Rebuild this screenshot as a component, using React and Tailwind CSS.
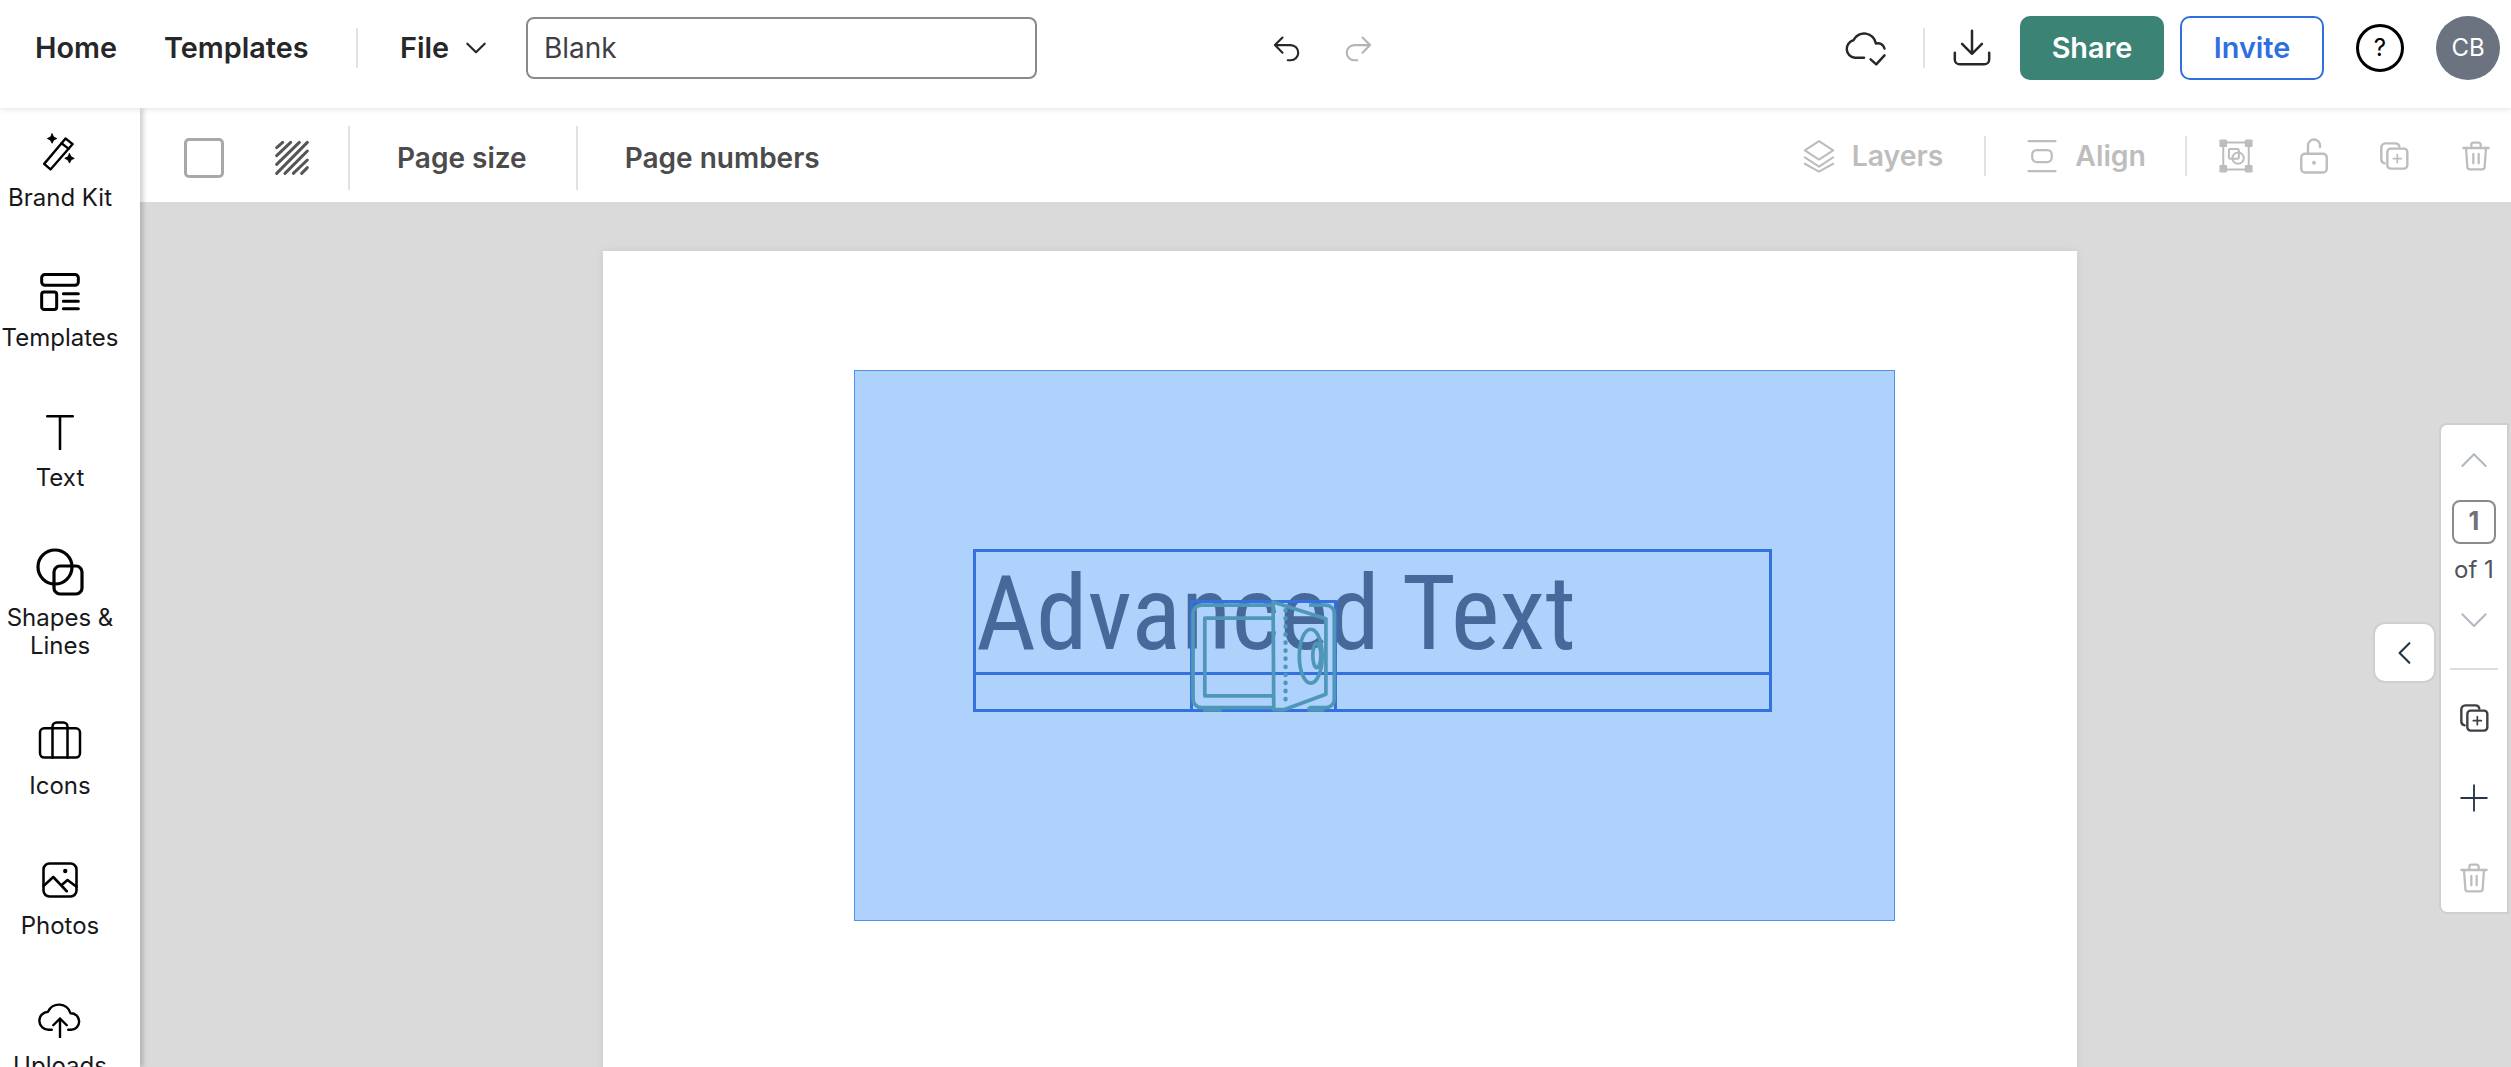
import React from 'react';

// shared stroke icon wrapper
function Ico({ w, h, vb = '0 0 24 24', sw = 2, className = '', children }) {
  return (
    <svg
      width={w}
      height={h}
      viewBox={vb}
      fill="none"
      stroke="currentColor"
      strokeWidth={sw}
      strokeLinecap="round"
      strokeLinejoin="round"
      className={`shrink-0 ${className}`}
    >
      {children}
    </svg>
  );
}

const CopyPlus = ({ size, className }) => (
  <Ico w={size} h={size} sw={1.8} className={className}>
    <path d="M5 17.5A3 3 0 0 1 2.5 15V5.5a3 3 0 0 1 3-3H13a3 3 0 0 1 3 2.5" />
    <rect x="7" y="6.5" width="15" height="15" rx="2.5" />
    <path d="M14.5 11v6M11.5 14h6" strokeWidth={1.3} />
  </Ico>
);

const Trash = ({ w, h, className }) => (
  <Ico w={w} h={h} sw={1.7} className={className}>
    <path d="M2.5 6h19M8.5 6V3.5a1.5 1.5 0 0 1 1.5-1.5h4a1.5 1.5 0 0 1 1.5 1.5V6" />
    <path d="M4.5 6l1 14a2 2 0 0 0 2 2h9a2 2 0 0 0 2-2l1-14M10 10.5v7M14 10.5v7" />
  </Ico>
);

const sideItems = [
  {
    label: 'Brand Kit',
    icon: (
      <Ico w={40} h={38} sw={1.5}>
        <path d="M2 19.5L15.5 3.5l4.5 3.5L6 23z" />
        <path d="M13 6.5l4.5 3.5" />
        <path d="M7 .5l1 2 2 1-2 1-1 2-1-2-2-1 2-1zM18 13l1 2 2 1-2 1-1 2-1-2-2-1 2-1z" fill="currentColor" strokeWidth={0.5} />
      </Ico>
    ),
  },
  {
    label: 'Templates',
    icon: (
      <Ico w={40} h={40} sw={1.8}>
        <rect x="1" y="1.5" width="22" height="6.5" rx="2" />
        <rect x="1" y="12" width="9" height="10.5" rx="1.5" />
        <path d="M14 13h9M14 17.5h9M14 22h9" />
      </Ico>
    ),
  },
  {
    label: 'Text',
    icon: (
      <Ico w={36} h={36} sw={1.7}>
        <path d="M3.5 1.5h17M12 1.5v22" />
      </Ico>
    ),
  },
  {
    label: 'Shapes & Lines',
    icon: (
      <Ico w={48} h={48} sw={1.6}>
        <circle cx="9.5" cy="9.5" r="8.5" />
        <rect x="9" y="9" width="14" height="14" rx="3" />
      </Ico>
    ),
  },
  {
    label: 'Icons',
    icon: (
      <Ico w={44} h={40} vb="0 0 26 24" sw={1.5}>
        <rect x="1" y="5" width="24" height="17.5" rx="2.5" />
        <path d="M8.5 22.5V4a2.5 2.5 0 0 1 2.5-2.5h4A2.5 2.5 0 0 1 17.5 4v18.5" />
      </Ico>
    ),
  },
  {
    label: 'Photos',
    icon: (
      <Ico w={36} h={36} sw={1.7}>
        <rect x="1" y="1" width="22" height="22" rx="4" />
        <path d="M1 16l6.5-6 9 9.5M13.5 15l3.5-3 6 4.5" />
        <circle cx="15.5" cy="6" r=".6" fill="currentColor" />
      </Ico>
    ),
  },
  {
    label: 'Uploads',
    icon: (
      <Ico w={44} h={36} vb="0 0 29 24" sw={1.6}>
        <path d="M9 18.5H7A6 6 0 0 1 6.5 6.5 8 8 0 0 1 21.5 7.5a5.5 5.5 0 0 1 .5 11h-2" />
        <path d="M14.5 23.5V11M10 15.5l4.5-4.5 4.5 4.5" />
      </Ico>
    ),
  },
];

function SideItem({ label, icon }) {
  return (
    <div className="flex flex-col items-center w-full">
      <div className="h-[40px] flex items-center justify-center">{icon}</div>
      <div className="mt-[12px] text-center text-[24px] leading-[28px] text-[#18181b]">{label}</div>
    </div>
  );
}

function Divider({ h, className = '' }) {
  return <div className={`w-[2px] bg-[#e2e2e2] ${h} ${className}`} />;
}

function TopBar() {
  return (
    <header className="h-[108px] pb-[12px] shrink-0 bg-white flex items-center relative z-20 shadow-[0_1px_6px_rgba(0,0,0,0.12)] text-[#27272a]">
      <div className="ml-[35px] w-[80px] text-[28.8px] font-semibold">Home</div>
      <div className="ml-[49px] w-[143px] whitespace-nowrap text-[28.8px] font-semibold">Templates</div>
      <Divider h="h-[40px]" className="ml-[49px]" />
      <div className="ml-[42px] w-[48px] text-[28.8px] font-semibold">File</div>
      <Ico w={26} h={26} sw={2} className="ml-[15px] text-[#27272a]">
        <path d="M4 8l8 8 8-8" />
      </Ico>
      <div className="ml-[37px] w-[511px] h-[62px] border-2 border-[#8a8a8a] rounded-[8px] flex items-center pl-[16px] text-[28px] text-[#3f3f46]">
        Blank
      </div>
      <Ico w={32} h={28} sw={1.8} className="ml-[233px]">
        <path d="M9 3L2.5 9.5 9 16M2.5 9.5H16a6.5 6.5 0 0 1 0 13h-2.5" />
      </Ico>
      <Ico w={32} h={28} sw={1.8} className="ml-[41px] text-[#b5b5b5]">
        <path d="M15 3l6.5 6.5L15 16M21.5 9.5H8a6.5 6.5 0 0 0 0 13h2.5" />
      </Ico>
      <Ico w={45} h={38} vb="40 55 135 115" sw={7.5} className="ml-[468px]">
        <path d="M103 142H75a27 27 0 0 1-4-53 36 36 0 0 1 68 10 20 20 0 0 1 26 15" />
        <path d="M123 147l17 15 25-27" />
      </Ico>
      <Divider h="h-[40px]" className="ml-[35px]" />
      <Ico w={40} h={38} vb="365 55 120 115" sw={7.5} className="ml-[27px]">
        <path d="M425 60v70M395 100l30 30 30-30" />
        <path d="M373 127v20a15 15 0 0 0 15 15h74a15 15 0 0 0 15-15v-20" />
      </Ico>
      <div className="ml-[28px] w-[144px] h-[64px] rounded-[10px] bg-[#3b8375] text-white flex items-center justify-center text-[28.8px] font-semibold">
        Share
      </div>
      <div className="ml-[16px] w-[144px] h-[64px] rounded-[10px] border-2 border-[#2f6fdf] text-[#2f6fdf] flex items-center justify-center text-[28.8px] font-semibold">
        Invite
      </div>
      <div className="ml-[32px] w-[48px] h-[48px] rounded-full border-[3px] border-black flex items-center justify-center text-[24px] text-black">
        ?
      </div>
      <div className="ml-[32px] w-[64px] h-[64px] rounded-full bg-[#6b7280] text-white flex items-center justify-center text-[24px]">
        CB
      </div>
    </header>
  );
}

function ToolBar() {
  return (
    <div className="h-[94px] pt-[6px] shrink-0 bg-white flex items-center">
      <div className="ml-[44px] w-[40px] h-[40px] rounded-[5px] border-[3px] border-[#a8a8a8] bg-white" />
      <Ico w={36} h={36} vb="312 45 108 108" sw={9} className="ml-[50px] text-[#555555]">
        <path d="M320 68l18-16M320 92l42-40M320 118l68-66M320 145l92-93M345 145l67-67M370 145l42-40M395 145l17-17" />
      </Ico>
      <Divider h="h-[64px]" className="ml-[38px]" />
      <div className="ml-[47px] text-[28px] font-semibold text-[#4b4b4b]">Page size</div>
      <Divider h="h-[64px]" className="ml-[49px]" />
      <div className="ml-[47px] text-[28px] font-semibold text-[#4b4b4b]">Page numbers</div>

      <div className="ml-auto mb-[4px] flex items-center text-[#bdbdbd]">
        <Ico w={34} h={34} sw={1.5}>
          <path d="M12 1.5L22 8l-10 6.5L2 8zM2 13l10 6.5L22 13M2 17.5L12 23l10-5.5" />
        </Ico>
        <div className="ml-[16px] text-[28.4px] font-semibold">Layers</div>
        <Divider h="h-[40px]" className="ml-[41px]" />
        <Ico w={30} h={36} vb="0 0 20 24" sw={1.5} className="ml-[41px]">
          <path d="M1 2h18M1 22h18" />
          <rect x="3.5" y="8" width="13" height="8" rx="3" />
        </Ico>
        <div className="ml-[18px] text-[28.4px] font-semibold">Align</div>
        <Divider h="h-[40px]" className="ml-[39px]" />
        <Ico w={34} h={34} sw={1.4} className="ml-[32px]">
          <path d="M3 2.5h18M3 21.5h18M3 2.5v19M21 2.5v19" />
          <rect x="1" y="1" width="4" height="4" fill="currentColor" />
          <rect x="19" y="1" width="4" height="4" fill="currentColor" />
          <rect x="1" y="19" width="4" height="4" fill="currentColor" />
          <rect x="19" y="19" width="4" height="4" fill="currentColor" />
          <rect x="7" y="7" width="7" height="7" rx="1" />
          <circle cx="13.5" cy="13.5" r="4" />
        </Ico>
        <Ico w={30} h={36} vb="0 0 20 24" sw={1.6} className="ml-[46px]">
          <path d="M6 10V5a4 4 0 0 1 8 0v1" />
          <rect x="1.5" y="10.5" width="17" height="12.5" rx="2.5" />
          <circle cx="10" cy="16.5" r=".5" fill="currentColor" />
        </Ico>
        <CopyPlus size={32} className="ml-[49px]" />
        <Trash w={32} h={36} className="ml-[50px] mr-[19px]" />
      </div>
    </div>
  );
}

function Vault() {
  return (
    <svg
      viewBox="92 30 435 333"
      className="absolute -left-[3px] -top-[3px] w-[147px] h-[112px]"
      fill="none"
      stroke="#4f97b8"
      strokeWidth="11"
      strokeLinejoin="round"
    >
      <path d="M340 45H125a25 25 0 0 0-25 25v255a25 25 0 0 0 25 25h215" />
      <path d="M445 45h50a25 25 0 0 1 25 25v255a25 25 0 0 1-25 25h-50" />
      <path d="M335 84H135v231h200" />
      <path d="M338 36l157 50v224l-125 46h-30z" />
      <path d="M375 60v280" strokeDasharray="1 23" strokeLinecap="round" strokeWidth="13" />
      <ellipse cx="450" cy="197" rx="34" ry="80" />
      <ellipse cx="468" cy="195" rx="12" ry="36" />
      <path d="M130 355h55M440 355h50" strokeWidth="14" />
    </svg>
  );
}

function DesignPage() {
  return (
    <div className="relative w-[1474px] h-[1000px] bg-white shadow-[0_0_8px_rgba(0,0,0,0.08)]">
      <div className="absolute left-[251px] top-[119px] w-[1041px] h-[551px] bg-[#aed2fb] border border-[#5090ee]" />
      <div className="absolute left-[370px] top-[298px] w-[799px] h-[163px] border-[3px] border-[#3370e0]">
        <div className="h-[123px] border-b-[3px] border-[#3370e0]">
          <div className="font-['Roboto',sans-serif] text-[#47689a] text-[104px] leading-[123px] whitespace-nowrap [font-stretch:75%]">
            Advanced Text
          </div>
        </div>
      </div>
      <div className="absolute left-[587px] top-[349px] w-[147px] h-[112px] border-[3px] border-[#3370e0]">
        <Vault />
      </div>
    </div>
  );
}

function PagePanel() {
  return (
    <>
      <div className="absolute left-[2233px] top-[420px] w-[63px] h-[61px] bg-white rounded-[12px] border-2 border-[#cfcfcf] flex items-center justify-center text-[#27364a]">
        <Ico w={26} h={26} sw={2}>
          <path d="M16 3L7 12l9 9" />
        </Ico>
      </div>
      <div className="absolute left-[2299px] top-[221px] w-[70px] h-[491px] bg-white rounded-l-[8px] border-2 border-[#cfcfcf] flex flex-col items-center">
        <Ico w={28} h={28} sw={1.8} className="mt-[20px] text-[#b3b9c2]">
          <path d="M2 18L12 8l10 10" />
        </Ico>
        <div className="mt-[27px] w-[44px] h-[44px] shrink-0 rounded-[8px] border-2 border-[#8a8a8f] flex items-center justify-center text-[25px] font-bold text-[#71717a]">
          1
        </div>
        <div className="mt-[12px] text-[24px] leading-[28px] text-[#52525b]">of 1</div>
        <Ico w={28} h={28} sw={1.8} className="mt-[21px] text-[#b3b9c2]">
          <path d="M2 8l10 10L22 8" />
        </Ico>
        <div className="mt-[35px] w-[48px] h-[2px] shrink-0 bg-[#dddddd]" />
        <CopyPlus size={32} className="mt-[32px] text-[#3f3f46]" />
        <Ico w={28} h={28} sw={1.6} className="mt-[50px] text-[#27364a]">
          <path d="M12 1v22M1 12h22" />
        </Ico>
        <Trash w={32} h={36} className="mt-[48px] text-[#bdbdbd]" />
      </div>
    </>
  );
}

export default function App() {
  return (
    <div className="h-[1067px] w-full flex flex-col overflow-hidden font-['Inter',sans-serif]">
      <TopBar />
      <div className="flex flex-1 min-h-0">
        <aside className="w-[140px] shrink-0 bg-white relative z-10 pt-[24px] pr-[20px] overflow-hidden flex flex-col gap-[60px] shadow-[3px_0_5px_rgba(0,0,0,0.2)]">
          {sideItems.map((item) => (
            <SideItem key={item.label} label={item.label} icon={item.icon} />
          ))}
        </aside>
        <main className="flex-1 min-w-0 flex flex-col">
          <ToolBar />
          <div className="flex-1 min-h-0 relative bg-[#dadada] overflow-hidden pl-[463px] pt-[49px]">
            <DesignPage />
            <PagePanel />
          </div>
        </main>
      </div>
    </div>
  );
}
